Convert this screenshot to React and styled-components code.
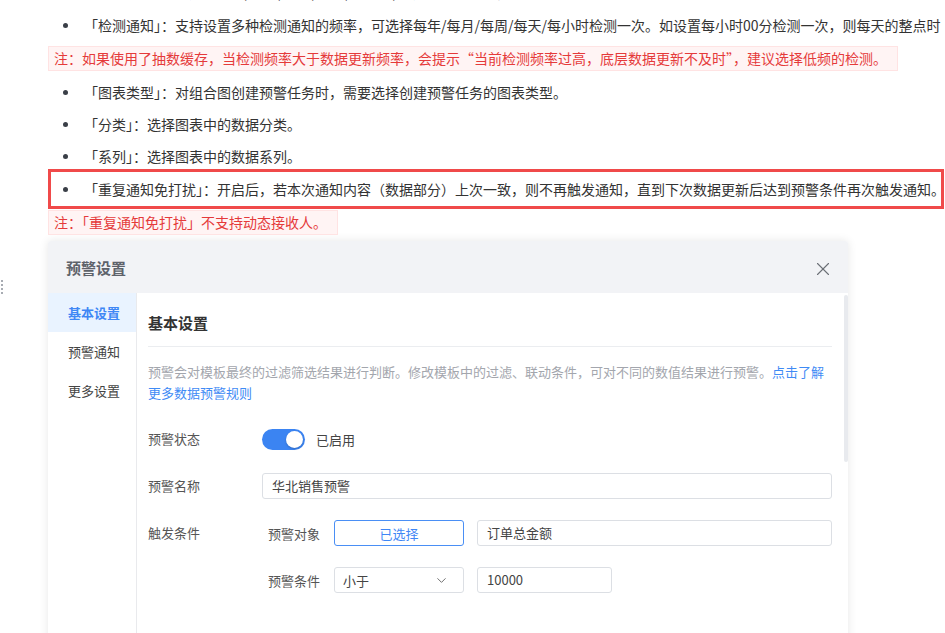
import React from 'react';
import styled, { createGlobalStyle } from 'styled-components';
import { ChevronDown, X } from 'lucide-react';

const GlobalStyle = createGlobalStyle`
  html, body {
    margin: 0;
    padding: 0;
    background: #fff;
    overflow: hidden;
  }
  body {
    width: 945px;
    height: 633px;
    font-family: 'Noto Sans CJK SC', 'Noto Sans', sans-serif;
    color: #333;
  }
`;

const App = () => {
  return (
    <>
      <GlobalStyle />
      <StPage>
        <StHandle />
        <StList>
          <StItem className='cut'>「预警频率」：可选择每年/每月/每周/每天/每小时/每分钟检测一次，默认每天检测一次。</StItem>
          <StItem>
            「检测通知」：支持设置多种检测通知的频率，可选择每年/每月/每周/每天/每小时检测一次。如设置每小时00分检测一次，则每天的整点时
          </StItem>
        </StList>
        <StNote>
          注：如果使用了抽数缓存，当检测频率大于数据更新频率，会提示“当前检测频率过高，底层数据更新不及时”，建议选择低频的检测。
        </StNote>
        <StList>
          <StItem>「图表类型」：对组合图创建预警任务时，需要选择创建预警任务的图表类型。</StItem>
          <StItem>「分类」：选择图表中的数据分类。</StItem>
          <StItem>「系列」：选择图表中的数据系列。</StItem>
          <StItem className='marked'>
            「重复通知免打扰」：开启后，若本次通知内容（数据部分）上次一致，则不再触发通知，直到下次数据更新后达到预警条件再次触发通知。
          </StItem>
        </StList>
        <StNote>注：「重复通知免打扰」不支持动态接收人。</StNote>

        <StDialog>
          <StDialogHeader>
            <StDialogTitle>预警设置</StDialogTitle>
            <StCloseBtn type='button'>
              <X size={22} strokeWidth={1.2} />
            </StCloseBtn>
          </StDialogHeader>
          <StDialogBody>
            <StSide>
              <StSideItem className='active'>基本设置</StSideItem>
              <StSideItem>预警通知</StSideItem>
              <StSideItem>更多设置</StSideItem>
            </StSide>
            <StContent>
              <StScrollbar />
              <StSectionTitle>基本设置</StSectionTitle>
              <StDesc>
                预警会对模板最终的过滤筛选结果进行判断。修改模板中的过滤、联动条件，可对不同的数值结果进行预警。
                <StLink>点击了解更多数据预警规则</StLink>
              </StDesc>

              <StForm>
                <StRow>
                  <StLabel>预警状态</StLabel>
                  <StToggle />
                  <StToggleText>已启用</StToggleText>
                </StRow>
                <StRow>
                  <StLabel>预警名称</StLabel>
                  <StInput>华北销售预警</StInput>
                </StRow>
                <StGroup>
                  <StLabel>触发条件</StLabel>
                  <StSubRows>
                    <StRow>
                      <StSubLabel>预警对象</StSubLabel>
                      <StPickBtn type='button'>已选择</StPickBtn>
                      <StInput>订单总金额</StInput>
                    </StRow>
                    <StRow>
                      <StSubLabel>预警条件</StSubLabel>
                      <StSelect>
                        小于
                        <ChevronDown size={15} strokeWidth={1.5} color='#666' />
                      </StSelect>
                      <StInput width='135px'>10000</StInput>
                    </StRow>
                  </StSubRows>
                </StGroup>
              </StForm>
            </StContent>
          </StDialogBody>
        </StDialog>
      </StPage>
    </>
  );
};

export default App;

const StPage = styled.main`
  position: relative;
  width: 945px;
  height: 633px;
  padding: 0 0 0 48px;
  box-sizing: border-box;
  overflow: hidden;
`;

const StHandle = styled.div`
  position: absolute;
  left: 1px;
  top: 280px;
  width: 0;
  height: 14px;
  border-left: 2px dotted #a8acb3;
`;

const StList = styled.ul`
  margin: 0;
  padding: 0;
  list-style: none;

  &:first-of-type {
    margin-top: -23px;
  }
`;

const StItem = styled.li`
  position: relative;
  height: 32px;
  padding-left: 36px;

  font-size: 14px;
  line-height: 32px;
  white-space: nowrap;
  color: #333;

  &::before {
    content: '';
    position: absolute;
    left: 15px;
    top: 14px;
    width: 5px;
    height: 5px;
    border-radius: 50%;
    background-color: #3a3f47;
  }

  &.cut {
    line-height: 30px;
  }

  &.marked {
    height: 34px;
    margin-top: -3px;
    margin-right: 1px;
    padding-left: 33px;
    line-height: 34px;
    border: 3px solid #f04a4a;

    &::before {
      left: 12px;
      top: 15px;
    }
  }
`;

const StNote = styled.div`
  display: inline-block;
  height: 23px;
  margin: 5px 0;
  padding: 0 10px 0 5px;

  font-size: 14px;
  line-height: 23px;
  white-space: nowrap;
  color: #e53a3a;

  border: 1px solid #ffe3e3;
  background-color: #fff4f4;

  &:last-of-type {
    margin-top: 1px;
  }
`;

const StDialog = styled.section`
  width: 800px;
  height: 420px;
  margin-top: 1px;

  background-color: #fff;
  border-radius: 3px;
  box-shadow: 0 0 10px rgba(0, 0, 0, 0.1);
  overflow: hidden;
`;

const StDialogHeader = styled.header`
  display: flex;
  justify-content: space-between;
  align-items: center;

  height: 52px;
  padding: 0 14px 0 18px;

  background-color: #f2f3f6;
`;

const StDialogTitle = styled.h2`
  margin: 0;

  font-size: 15px;
  font-weight: 700;
  color: #5e626a;
`;

const StCloseBtn = styled.button`
  display: flex;
  padding: 0;
  margin-top: 3px;

  border: none;
  background: none;
  color: #6b6f76;
`;

const StDialogBody = styled.div`
  display: flex;
  height: 368px;
`;

const StSide = styled.nav`
  display: flex;
  flex-direction: column;

  width: 88px;
  border-right: 1px solid #e9eaed;
`;

const StSideItem = styled.div`
  height: 39px;
  padding-left: 4px;

  font-size: 13px;
  line-height: 39px;
  text-align: center;
  color: #444;

  &.active {
    font-weight: 700;
    color: #3f87f5;
    background-color: #e9f3ff;
  }
`;

const StContent = styled.div`
  position: relative;
  flex: 1;
  padding: 20px 16px 0 11px;
`;

const StScrollbar = styled.div`
  position: absolute;
  right: 0;
  top: 2px;
  width: 4px;
  height: 167px;

  border-radius: 2px;
  background-color: #e8eaee;
`;

const StSectionTitle = styled.h3`
  margin: 0;
  padding-bottom: 13px;

  font-size: 15px;
  font-weight: 700;
  line-height: 20px;
  color: #333;

  border-bottom: 1px solid #ebedf0;
`;

const StDesc = styled.p`
  margin: 14px 0 0;

  font-size: 13px;
  line-height: 21px;
  color: #a3a6ad;
`;

const StLink = styled.span`
  color: #3f8bf5;
`;

const StForm = styled.div`
  display: flex;
  flex-direction: column;
  gap: 15px;
  margin-top: 20px;
`;

const StRow = styled.div`
  display: flex;
  align-items: center;
  gap: 13px;
  height: 32px;
`;

const StGroup = styled.div`
  display: flex;
  align-items: flex-start;
  gap: 13px;
`;

const StSubRows = styled.div`
  display: flex;
  flex: 1;
  flex-direction: column;
  gap: 15px;
`;

const StLabel = styled.span`
  flex-shrink: 0;
  width: 101px;

  font-size: 13px;
  line-height: 32px;
  color: #555;
`;

const StSubLabel = styled.span`
  width: 53px;
  padding-left: 6px;

  font-size: 13px;
  color: #555;
`;

const StToggle = styled.div`
  position: relative;
  width: 43px;
  height: 21px;

  border-radius: 11px;
  background-color: #3b84f2;

  &::after {
    content: '';
    position: absolute;
    right: 2px;
    top: 2px;
    width: 17px;
    height: 17px;
    border-radius: 50%;
    background-color: #fff;
    box-shadow: 0 1px 2px rgba(0, 0, 0, 0.2);
  }
`;

const StToggleText = styled.span`
  margin-left: -2px;
  font-size: 13px;
  color: #444;
`;

const StInput = styled.div`
  box-sizing: border-box;
  flex: ${(p) => (p.width ? '0 0 auto' : '1')};
  width: ${(p) => p.width || 'auto'};
  height: 26px;
  padding: 0 9px;

  font-family: 'Noto Sans CJK SC', 'Liberation Sans', sans-serif;
  font-size: 13px;
  line-height: 24px;
  color: #444;

  border: 1px solid #dcdfe4;
  border-radius: 3px;
  background-color: #fff;
`;

const StPickBtn = styled.button`
  box-sizing: border-box;
  flex-shrink: 0;
  width: 130px;
  height: 26px;
  padding: 0;

  font-family: 'Noto Sans CJK SC', sans-serif;
  font-size: 13px;
  color: #3f87f5;

  border: 1px solid #4a8ff5;
  border-radius: 3px;
  background-color: #fff;
`;

const StSelect = styled.div`
  display: flex;
  justify-content: space-between;
  align-items: center;
  box-sizing: border-box;
  flex-shrink: 0;

  width: 130px;
  height: 26px;
  padding: 0 14px 0 8px;

  font-size: 13px;
  color: #444;

  border: 1px solid #dcdfe4;
  border-radius: 3px;
`;
